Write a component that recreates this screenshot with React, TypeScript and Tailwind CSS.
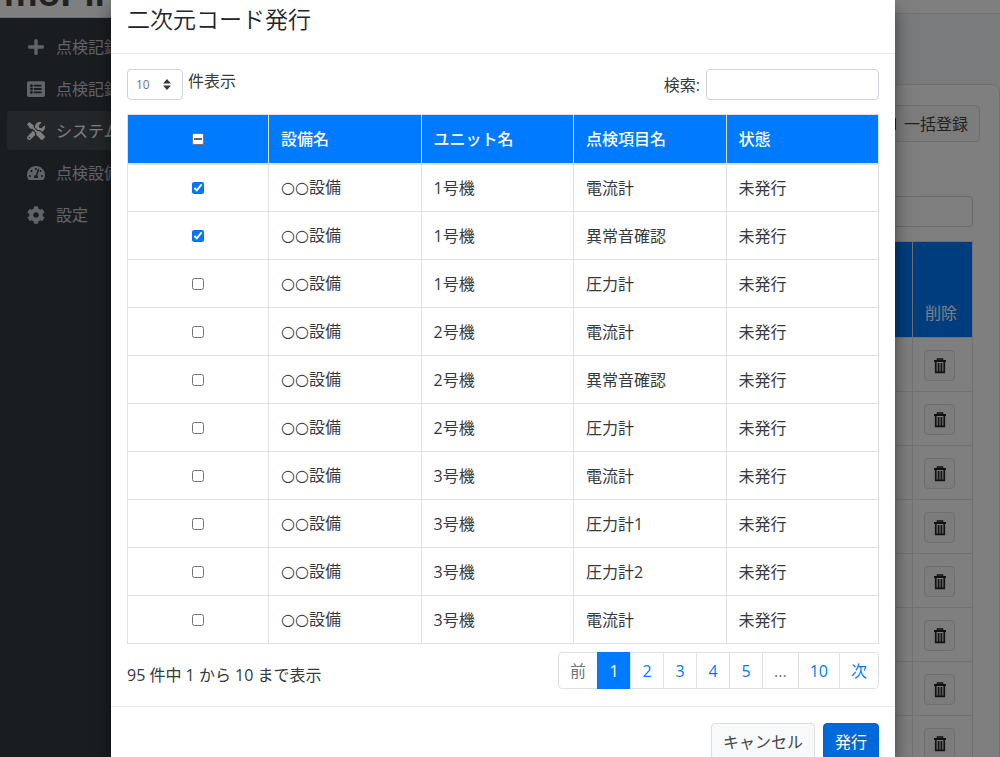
import { useEffect, useRef, useState } from 'react';
import type { ReactNode } from 'react';
import { FaCog, FaListAlt, FaPlus, FaTachometerAlt, FaTools } from 'react-icons/fa';

interface Item {
  id: number;
  facility: string;
  unit: string;
  name: string;
  status: string;
}

const items: Item[] = [
  { id: 1, facility: '設備', unit: '1号機', name: '電流計', status: '未発行' },
  { id: 2, facility: '設備', unit: '1号機', name: '異常音確認', status: '未発行' },
  { id: 3, facility: '設備', unit: '1号機', name: '圧力計', status: '未発行' },
  { id: 4, facility: '設備', unit: '2号機', name: '電流計', status: '未発行' },
  { id: 5, facility: '設備', unit: '2号機', name: '異常音確認', status: '未発行' },
  { id: 6, facility: '設備', unit: '2号機', name: '圧力計', status: '未発行' },
  { id: 7, facility: '設備', unit: '3号機', name: '電流計', status: '未発行' },
  { id: 8, facility: '設備', unit: '3号機', name: '圧力計1', status: '未発行' },
  { id: 9, facility: '設備', unit: '3号機', name: '圧力計2', status: '未発行' },
  { id: 10, facility: '設備', unit: '3号機', name: '電流計', status: '未発行' },
];

const columns = ['設備名', 'ユニット名', '点検項目名', '状態'];

const navItems: { label: string; icon: ReactNode; active?: boolean }[] = [
  { label: '点検記録', icon: <FaPlus /> },
  { label: '点検記録', icon: <FaListAlt /> },
  { label: 'システム', icon: <FaTools />, active: true },
  { label: '点検設備', icon: <FaTachometerAlt /> },
  { label: '設定', icon: <FaCog /> },
];

const pages = ['前', '1', '2', '3', '4', '5', '...', '10', '次'];

function TrashIcon() {
  return (
    <svg width="14" height="16" viewBox="0 0 14 16" fill="none" stroke="currentColor" aria-hidden="true">
      <path d="M1 3h12" strokeWidth="2" />
      <path d="M4.5 2V1h5v1" strokeWidth="1.5" />
      <path d="M2.75 4v10.25h8.5V4M5.6 5v9M8.4 5v9" strokeWidth="1.75" />
    </svg>
  );
}

function Sidebar() {
  return (
    <aside className="w-[245px] shrink-0 bg-[#343a40]">
      <div className="flex h-[18px] items-end overflow-hidden border-b border-[#dee2e6] bg-white pb-[6px] pl-1 text-[#444]">
        <span className="font-['Lato'] text-[40px] leading-10 font-bold">moPil</span>
      </div>
      <nav className="flex flex-col gap-[3px] px-[7px] pt-[9px]">
        {navItems.map((item, index) => (
          <a
            key={index}
            href="#"
            className={
              item.active
                ? 'flex h-[39px] items-center gap-[10px] rounded bg-[#484e53] pl-[19px] text-white'
                : 'flex h-[39px] items-center gap-[10px] rounded pl-[19px] text-[#c2c7d0]'
            }
          >
            <span className="flex w-5 justify-center text-[18px]">{item.icon}</span>
            {item.label}
          </a>
        ))}
      </nav>
    </aside>
  );
}

function Background() {
  return (
    <div className="flex h-full">
      <Sidebar />
      <main className="min-w-0 flex-1 bg-[#f4f6f9]">
        <div className="h-[14px] border-b border-[#dee2e6] bg-white" />
        <div className="mt-[70px] flex h-full flex-col items-end rounded-lg border border-[#dfe1e4] bg-white pt-5 pr-[19px]">
          <button className="flex h-[37px] shrink-0 items-center gap-2 rounded border border-[#ddd] bg-[#f8f9fa] px-[11px] text-[#444]">
            <span className="h-3 w-3 bg-[#444]" />
            一括登録
          </button>
          <div className="mt-[54px] mr-[7px] w-full max-w-[600px] shrink-0">
            <input
              aria-label="一覧を検索"
              className="float-right h-[31px] w-[172px] rounded border border-[#ced4da] bg-white"
            />
            <table className="mt-[45px] w-full table-fixed border-collapse text-left">
              <thead>
                <tr className="h-24 bg-[#007bff] align-bottom text-white">
                  <th className="border border-[#dee2e6]" />
                  <th className="w-[60px] border border-[#dee2e6]" />
                  <th className="w-[60px] border border-[#dee2e6] px-3 pb-3 font-normal">削除</th>
                </tr>
              </thead>
              <tbody>
                {items.map((item) => (
                  <tr key={item.id} className="h-[54px]">
                    <td className="border border-[#dee2e6]" />
                    {['編集', '削除'].map((action) => (
                      <td key={action} className="border border-[#dee2e6] px-[11px] pt-3 pb-[10px]">
                        <button
                          aria-label={action}
                          className="flex h-[31px] w-[31px] items-center justify-center rounded border border-[#ddd] bg-[#f8f9fa] text-[#212529]"
                        >
                          <TrashIcon />
                        </button>
                      </td>
                    ))}
                  </tr>
                ))}
              </tbody>
            </table>
          </div>
        </div>
      </main>
    </div>
  );
}

function ItemTable() {
  const [selected, setSelected] = useState<number[]>([1, 2]);
  const allRef = useRef<HTMLInputElement>(null);
  const partial = selected.length > 0 && selected.length < items.length;

  useEffect(() => {
    if (allRef.current) allRef.current.indeterminate = partial;
  }, [partial]);

  const toggle = (id: number) =>
    setSelected(selected.includes(id) ? selected.filter((s) => s !== id) : [...selected, id]);

  return (
    <table className="mt-[14px] w-full table-fixed border-collapse text-left">
      <thead>
        <tr className="h-[49px] bg-[#007bff] text-white">
          <th className="w-[141px] border border-b-2 border-[#dee2e6]">
            <input
              ref={allRef}
              type="checkbox"
              aria-label="すべて選択"
              checked={selected.length === items.length}
              onChange={() => setSelected(selected.length === items.length ? [] : items.map((i) => i.id))}
              className="mx-auto flex h-3 w-3 appearance-none items-center justify-center rounded-xs border border-[#767676] bg-white before:h-[2px] before:w-2 indeterminate:before:bg-[#666]"
            />
          </th>
          {columns.map((column) => (
            <th key={column} className="border border-b-2 border-[#dee2e6] px-3 font-medium">
              {column}
            </th>
          ))}
        </tr>
      </thead>
      <tbody>
        {items.map((item) => (
          <tr key={item.id} className="h-12">
            <td className="border border-[#dee2e6]">
              <input
                type="checkbox"
                aria-label={item.unit + ' ' + item.name}
                checked={selected.includes(item.id)}
                onChange={() => toggle(item.id)}
                className="mx-auto block h-3 w-3"
              />
            </td>
            <td className="border border-[#dee2e6] px-3">
              <span className="font-['DejaVu_Sans',sans-serif]">○○</span>
              {item.facility}
            </td>
            <td className="border border-[#dee2e6] px-3">{item.unit}</td>
            <td className="border border-[#dee2e6] px-3">{item.name}</td>
            <td className="border border-[#dee2e6] px-3">{item.status}</td>
          </tr>
        ))}
      </tbody>
    </table>
  );
}

function Pagination() {
  return (
    <nav className="flex pl-px" aria-label="ページ">
      {pages.map((page) => {
        let style = 'border-[#dee2e6] bg-white text-[#007bff]';
        if (page === '1') style = 'border-[#007bff] bg-[#007bff] text-white';
        if (page === '前' || page === '...') style = 'border-[#dee2e6] bg-white text-[#6c757d]';
        return (
          <button
            key={page}
            className={'-ml-px h-[37px] min-w-[34px] border px-[11px] first:rounded-l last:rounded-r ' + style}
          >
            {page}
          </button>
        );
      })}
    </nav>
  );
}

export default function App() {
  return (
    <div className="relative h-screen overflow-hidden font-['Open_Sans','Noto_Sans_CJK_JP',sans-serif] text-base leading-6 font-normal text-[#343a40]">
      <Background />
      <div className="absolute inset-0 bg-black/50 pl-[6px]">
        <div role="dialog" aria-labelledby="dialog-title" className="mx-auto h-full max-w-[784px] bg-white shadow-[0_8px_16px_rgba(0,0,0,0.5)]">
          <header className="flex h-[54px] items-start border-b border-[#e9ecef] px-4 pt-[3px]">
            <h1 id="dialog-title" className="text-[23px] leading-8 font-[350] text-[#212529]">
              二次元コード発行
            </h1>
          </header>
          <div className="px-4 pt-[15px]">
            <div className="flex items-center justify-between">
              <label className="flex items-start gap-[5px]">
                <span className="relative">
                  <select className="h-[31px] w-14 appearance-none rounded border border-[#ced4da] bg-white pl-2 text-xs text-[#6c757d]">
                    <option>10</option>
                    <option>25</option>
                    <option>50</option>
                  </select>
                  <svg className="pointer-events-none absolute top-[10px] right-3" width="8" height="11" viewBox="0 0 8 11" fill="#343a40" aria-hidden="true">
                    <path d="M0 4.5 4 0l4 4.5zM0 6.5 4 11l4-4.5z" />
                  </svg>
                </span>
                <span>件表示</span>
              </label>
              <label className="flex items-center gap-[6px]">
                検索:
                <input type="search" className="h-[31px] w-[173px] rounded border border-[#ced4da] bg-white px-2 text-sm" />
              </label>
            </div>
            <ItemTable />
            <div className="flex items-start justify-between pt-2 pb-[17px]">
              <p className="pt-[11px]">95 件中 1 から 10 まで表示</p>
              <Pagination />
            </div>
          </div>
          <footer className="flex justify-end gap-2 border-t border-[#e9ecef] px-4 py-4">
            <button className="h-[37px] rounded border border-[#ddd] bg-[#f8f9fa] px-[11px] text-[#444]">
              キャンセル
            </button>
            <button className="h-[37px] rounded border border-[#0062cc] bg-[#0069d9] px-[11px] text-white">発行</button>
          </footer>
        </div>
      </div>
    </div>
  );
}
